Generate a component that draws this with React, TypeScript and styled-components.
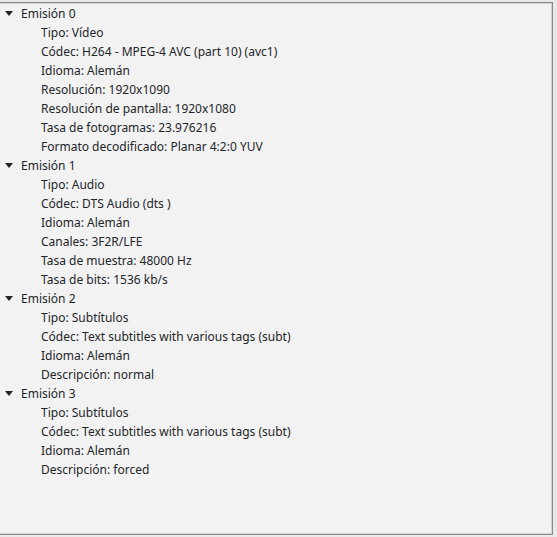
import styled, { createGlobalStyle } from 'styled-components';

const Global = createGlobalStyle`
  html, body {
    margin: 0;
    padding: 0;
    background: #e9e9e9;
  }
  body {
    font-family: "Noto Sans", "DejaVu Sans", sans-serif;
    font-size: 12px;
    color: #232629;
  }
`;

const Panel = styled.div`
  margin-top: 2px;
  width: 552px;
  height: 530px;
  background: #f2f2f2;
  border-top: 1px solid #8a8a8a;
  border-right: 1px solid #8a8a8a;
  border-bottom: 1px solid #8a8a8a;
  box-shadow: inset 0 1px 0 #d4d4d4, inset -1px 0 0 #d4d4d4, inset 0 -1px 0 #d4d4d4;
  padding-top: 1px;
  box-sizing: content-box;
`;

const Tree = styled.ul`
  list-style: none;
  margin: 0;
  padding: 0;
`;

const Row = styled.li<{ $depth: number }>`
  display: flex;
  align-items: center;
  height: 19px;
  padding-left: ${(p) => (p.$depth === 0 ? 5 : 41)}px;
  white-space: nowrap;
`;

const Arrow = styled.span`
  width: 0;
  height: 0;
  border-left: 4px solid transparent;
  border-right: 4px solid transparent;
  border-top: 5px solid #232629;
  margin-right: 8px;
`;

type Stream = { title: string; props: string[] };

const streams: Stream[] = [
  {
    title: 'Emisión 0',
    props: [
      'Tipo: Vídeo',
      'Códec: H264 - MPEG-4 AVC (part 10) (avc1)',
      'Idioma: Alemán',
      'Resolución: 1920x1090',
      'Resolución de pantalla: 1920x1080',
      'Tasa de fotogramas: 23.976216',
      'Formato decodificado: Planar 4:2:0 YUV',
    ],
  },
  {
    title: 'Emisión 1',
    props: [
      'Tipo: Audio',
      'Códec: DTS Audio (dts )',
      'Idioma: Alemán',
      'Canales: 3F2R/LFE',
      'Tasa de muestra: 48000 Hz',
      'Tasa de bits: 1536 kb/s',
    ],
  },
  {
    title: 'Emisión 2',
    props: [
      'Tipo: Subtítulos',
      'Códec: Text subtitles with various tags (subt)',
      'Idioma: Alemán',
      'Descripción: normal',
    ],
  },
  {
    title: 'Emisión 3',
    props: [
      'Tipo: Subtítulos',
      'Códec: Text subtitles with various tags (subt)',
      'Idioma: Alemán',
      'Descripción: forced',
    ],
  },
];

export default function App() {
  return (
    <>
      <Global />
      <Panel>
        <Tree>
          {streams.map((s) => [
            <Row key={s.title} $depth={0}>
              <Arrow />
              {s.title}
            </Row>,
            ...s.props.map((p, i) => (
              <Row key={s.title + i} $depth={1}>
                {p}
              </Row>
            )),
          ])}
        </Tree>
      </Panel>
    </>
  );
}
